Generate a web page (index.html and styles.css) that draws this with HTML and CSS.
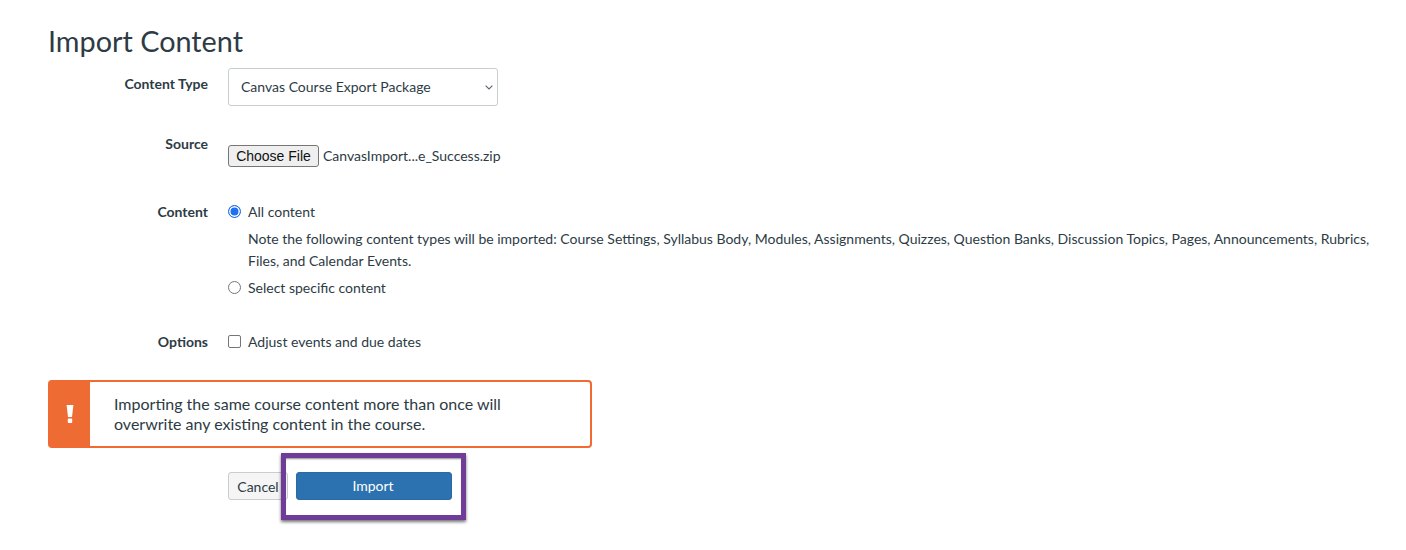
FILE: index.html
```html
<!DOCTYPE html>
<html lang="en">
<head>
<meta charset="utf-8">
<title>Import Content</title>
<link rel="stylesheet" href="styles.css">
</head>
<body>
<main class="page">
  <h1 class="title">Import Content</h1>
  <form class="form">
    <div class="row row-type">
      <div class="label">Content Type</div>
      <div class="field">
        <div class="select">
          <span>Canvas Course Export Package</span>
          <svg class="chevron" width="8" height="5" viewBox="0 0 8 5"><path d="M0.6 0.6L4 4l3.4-3.4" fill="none" stroke="#5a6570" stroke-width="1.1"/></svg>
        </div>
      </div>
    </div>
    <div class="row row-source">
      <div class="label">Source</div>
      <div class="field file-field">
        <span class="file-btn">Choose File</span>
        <span class="file-name">CanvasImport...e_Success.zip</span>
      </div>
    </div>
    <div class="row row-content">
      <div class="label">Content</div>
      <div class="field">
        <div class="choice">
          <span class="radio radio-on"></span>
          <span>All content</span>
        </div>
        <p class="note">Note the following content types will be imported: Course Settings, Syllabus Body, Modules, Assignments, Quizzes, Question Banks, Discussion Topics, Pages, Announcements, Rubrics, Files, and Calendar Events.</p>
        <div class="choice">
          <span class="radio"></span>
          <span>Select specific content</span>
        </div>
      </div>
    </div>
    <div class="row row-options">
      <div class="label">Options</div>
      <div class="field">
        <div class="choice">
          <span class="check"></span>
          <span>Adjust events and due dates</span>
        </div>
      </div>
    </div>
    <div class="alert">
      <div class="alert-icon">
        <svg width="8" height="18" viewBox="0 0 8 18"><path d="M0.6 0h6.8L6 12H2z" fill="#fff"/><rect x="1.8" y="13.6" width="4.4" height="4.4" rx="0.8" fill="#fff"/></svg>
      </div>
      <p class="alert-text">Importing the same course content more than once will overwrite any existing content in the course.</p>
    </div>
    <div class="actions">
      <span class="btn btn-cancel">Cancel</span>
      <span class="btn btn-import">Import</span>
      <span class="highlight"></span>
    </div>
  </form>
</main>
</body>
</html>
```

FILE: styles.css
```css
* { box-sizing: border-box; }
html, body { margin: 0; background: #fff; }
body {
  font-family: Lato, "Open Sans", sans-serif;
  color: #2d3b45;
  font-size: 14px;
  height: 550px;
  overflow: hidden;
}
.page { padding: 23px 0 0 48px; }
.title {
  margin: 0;
  font-size: 28.8px;
  font-weight: 400;
  line-height: 36px;
}
.form { margin-top: 9px; }
.row { display: grid; grid-template-columns: 160px 1fr; column-gap: 20px; }
.label { text-align: right; font-weight: 700; line-height: 20px; font-size: 14px; }
.row-type .label { padding-top: 6px; }
.select {
  width: 270px;
  height: 38px;
  border: 1px solid #c7cdd1;
  border-radius: 3px;
  padding: 0 4px 0 12px;
  display: flex;
  align-items: center;
  justify-content: space-between;
  font-size: 14px;
}
.select span { padding-bottom: 2px; }
.row-source { margin-top: 28px; }
.file-field { display: flex; align-items: center; gap: 4px; padding-top: 11px; }
.file-btn {
  font-family: "Liberation Sans", Arial, sans-serif;
  font-size: 14px;
  color: #111;
  background: #efefef;
  border: 1px solid #767676;
  border-radius: 3px;
  height: 22px;
  width: 91px;
  display: flex;
  align-items: center;
  justify-content: center;
}
.file-name { font-size: 14px; padding-bottom: 2px; }
.row-content { margin-top: 33px; }
.row-content .label { line-height: 22px; padding-top: 1px; }
.choice { display: flex; align-items: center; gap: 7px; height: 22px; }
.radio {
  width: 13px;
  height: 13px;
  border-radius: 50%;
  border: 1px solid #767676;
  background: #fff;
}
.radio-on { border: 1.5px solid #1f6fee; box-shadow: inset 0 0 0 1.5px #fff; background: #1f6fee; }
.note { margin: 6px 0 4px 20px; line-height: 22px; max-width: 1140px; }
.row-options { margin-top: 32px; }
.row-options .label { line-height: 22px; padding-top: 1px; }
.check {
  width: 13px;
  height: 13px;
  border: 1px solid #767676;
  border-radius: 2px;
  background: #fff;
}
.alert {
  width: 544px;
  height: 68px;
  margin-top: 27px;
  border: 2px solid #f06a31;
  border-radius: 4px;
  display: flex;
  background: #fff;
}
.alert-icon {
  flex: none;
  width: 40px;
  background: #ee6b33;
  display: flex;
  align-items: center;
  justify-content: center;
}
.alert-text {
  margin: 0;
  padding: 12px 70px 0 24px;
  font-size: 16px;
  line-height: 20px;
}
.actions {
  position: relative;
  margin: 24px 0 0 180px;
  display: flex;
  gap: 8px;
  align-items: center;
}
.btn {
  height: 28px;
  border-radius: 3px;
  display: flex;
  align-items: center;
  justify-content: center;
}
.btn-cancel {
  width: 60px;
  background: #f5f5f5;
  border: 1px solid #c7cdd1;
}
.btn-import {
  width: 156px;
  background: #2d72b0;
  border: 1px solid #2a6aa5;
  color: #fff;
  padding: 0 2px 2px 0;
}
.highlight {
  position: absolute;
  left: 53px;
  top: -19px;
  width: 185px;
  height: 67px;
  border: 5px solid #6f3c97;
  box-shadow: 0 2px 3px rgba(0,0,0,.55), inset 0 2px 2px -1px rgba(0,0,0,.45);
  pointer-events: none;
}
```
